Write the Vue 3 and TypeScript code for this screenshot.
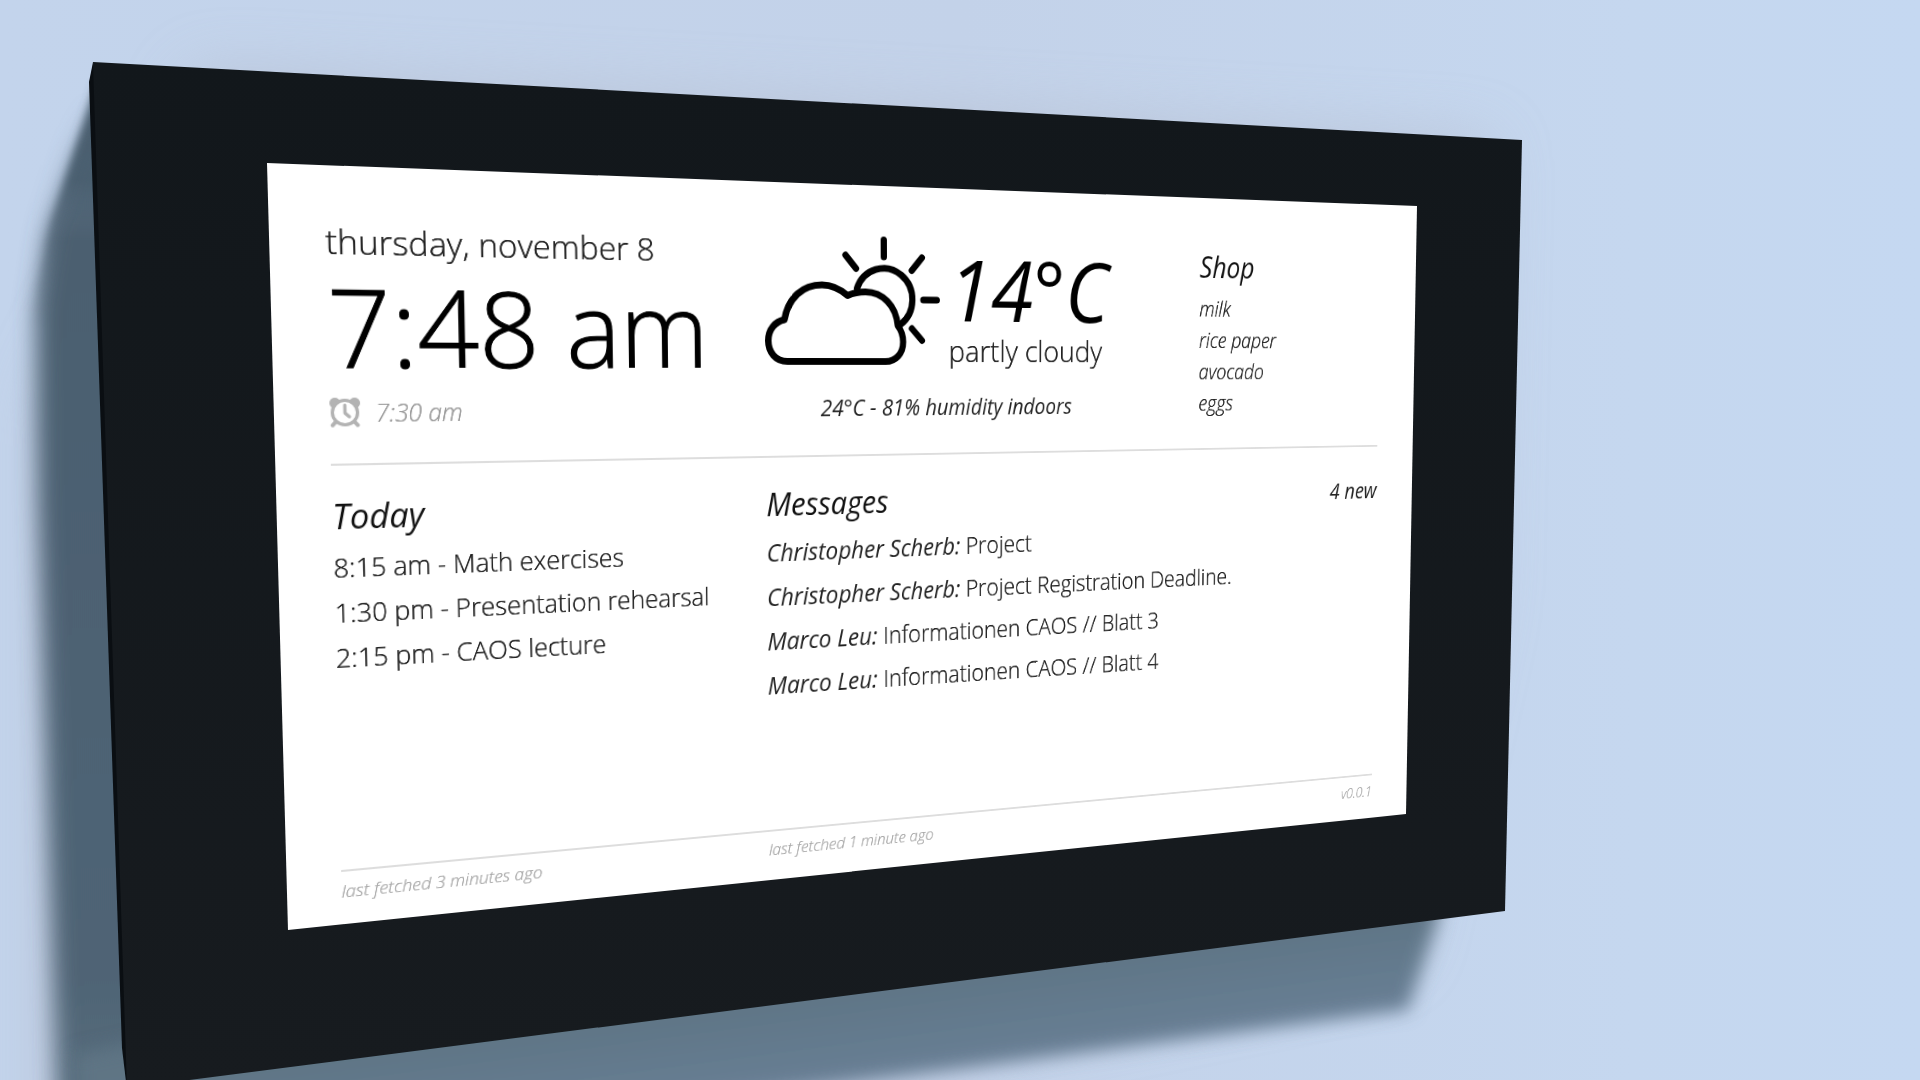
<script setup lang="ts">
import { computed, onBeforeUnmount, onMounted, ref } from 'vue'

type Point = [number, number]

interface Appointment {
  time: string
  title: string
}

interface Message {
  from: string
  subject: string
}

const shopping: string[] = ['milk', 'rice paper', 'avocado', 'eggs']

const appointments: Appointment[] = [
  { time: '8:15 am', title: 'Math exercises' },
  { time: '1:30 pm', title: 'Presentation rehearsal' },
  { time: '2:15 pm', title: 'CAOS lecture' },
]

const messages: Message[] = [
  { from: 'Christopher Scherb', subject: 'Project' },
  { from: 'Christopher Scherb', subject: 'Project Registration Deadline.' },
  { from: 'Marco Leu', subject: 'Informationen CAOS // Blatt 3' },
  { from: 'Marco Leu', subject: 'Informationen CAOS // Blatt 4' },
]

// The wall scene is drawn in this coordinate space and scales with the window.
const SCENE_WIDTH = 1920
// Corners of the display glass in scene space, clockwise from the top left.
const corners: Point[] = [
  [267, 163],
  [1417, 206],
  [1406, 814],
  [288, 930],
]
const glass = corners.map((corner) => corner.join(',')).join(' ')

const scene = ref<HTMLElement | null>(null)
const screen = ref<HTMLElement | null>(null)
const scale = ref(1)
const size = ref({ w: 1280, h: 720 })

function measure(): void {
  if (scene.value) scale.value = scene.value.clientWidth / SCENE_WIDTH
  if (screen.value) size.value = { w: screen.value.offsetWidth, h: screen.value.offsetHeight }
}

// Projects the flat display onto the four corners of the glass.
const projection = computed<string>(() => {
  const [p0, p1, p2, p3] = corners.map(([x, y]): Point => [x * scale.value, y * scale.value])
  const { w, h } = size.value
  const dx1 = p1[0] - p2[0]
  const dx2 = p3[0] - p2[0]
  const sx = p0[0] - p1[0] + p2[0] - p3[0]
  const dy1 = p1[1] - p2[1]
  const dy2 = p3[1] - p2[1]
  const sy = p0[1] - p1[1] + p2[1] - p3[1]
  const det = dx1 * dy2 - dx2 * dy1
  const g = (sx * dy2 - dx2 * sy) / det
  const k = (dx1 * sy - sx * dy1) / det
  const m = [
    (p1[0] - p0[0] + g * p1[0]) / w, (p1[1] - p0[1] + g * p1[1]) / w, 0, g / w,
    (p3[0] - p0[0] + k * p3[0]) / h, (p3[1] - p0[1] + k * p3[1]) / h, 0, k / h,
    0, 0, 1, 0,
    p0[0], p0[1], 0, 1,
  ]
  return `matrix3d(${m.map((n) => n.toFixed(10)).join(',')})`
})

let observer: ResizeObserver | undefined
onMounted(() => {
  measure()
  observer = new ResizeObserver(measure)
  if (scene.value) observer.observe(scene.value)
})
onBeforeUnmount(() => observer?.disconnect())
</script>

<template>
  <div ref="scene" class="scene">
    <svg class="wall" viewBox="0 0 1920 1080" aria-hidden="true">
      <defs>
        <linearGradient id="wallTone" x1="0" y1="0" x2="1" y2="0">
          <stop offset="0" stop-color="#c3d4ec" />
          <stop offset="0.5" stop-color="#c3d2e9" />
          <stop offset="0.85" stop-color="#c5d7ef" />
          <stop offset="1" stop-color="#c5d8f1" />
        </linearGradient>
        <linearGradient id="sideShade" x1="0" y1="0" x2="0" y2="1">
          <stop offset="0" stop-color="#4a5e6f" />
          <stop offset="0.8" stop-color="#4f6475" />
          <stop offset="1" stop-color="#5c7383" />
        </linearGradient>
        <linearGradient id="underShade" gradientUnits="userSpaceOnUse" x1="1000" y1="960" x2="1016" y2="1080">
          <stop offset="0" stop-color="#5e7484" />
          <stop offset="1" stop-color="#6a8198" />
        </linearGradient>
        <linearGradient id="face" x1="0" y1="0" x2="0" y2="1">
          <stop offset="0" stop-color="#12171b" />
          <stop offset="1" stop-color="#171b1f" />
        </linearGradient>
        <linearGradient id="fadeDown" gradientUnits="userSpaceOnUse" x1="0" y1="90" x2="0" y2="240">
          <stop offset="0" stop-color="#000" />
          <stop offset="1" stop-color="#fff" />
        </linearGradient>
        <linearGradient id="fadeUp" gradientUnits="userSpaceOnUse" x1="0" y1="180" x2="0" y2="330">
          <stop offset="0" stop-color="#fff" />
          <stop offset="1" stop-color="#000" />
        </linearGradient>
        <mask id="lower" maskUnits="userSpaceOnUse" x="0" y="0" width="1920" height="1080">
          <rect width="1920" height="1080" fill="url(#fadeDown)" />
        </mask>
        <mask id="upper" maskUnits="userSpaceOnUse" x="0" y="0" width="1920" height="1080">
          <rect width="1920" height="1080" fill="url(#fadeUp)" />
        </mask>
        <filter id="soft" filterUnits="userSpaceOnUse" x="-200" y="-100" width="2200" height="1400">
          <feGaussianBlur stdDeviation="11" />
        </filter>
        <filter id="medium" filterUnits="userSpaceOnUse" x="-200" y="-100" width="2200" height="1400">
          <feGaussianBlur stdDeviation="9" />
        </filter>
        <filter id="tight" filterUnits="userSpaceOnUse" x="-200" y="-100" width="2200" height="1400">
          <feGaussianBlur stdDeviation="4" />
        </filter>
        <filter id="haze" filterUnits="userSpaceOnUse" x="-300" y="-200" width="2500" height="1600">
          <feGaussianBlur stdDeviation="30" />
        </filter>
      </defs>
      <rect width="1920" height="1080" fill="url(#wallTone)" />
      <polygon points="200,70 1490,140 1480,600 1400,960 40,1240 40,400" fill="#b4bccd" opacity="0.6" filter="url(#haze)" />
      <g mask="url(#upper)">
        <polygon points="96,84 74,150 52,220 38,290 34,400 200,400 200,84" fill="url(#sideShade)" filter="url(#tight)" />
      </g>
      <g mask="url(#lower)">
        <polygon points="98,90 72,155 48,230 36,310 38,500 60,1200 300,1200 300,90" fill="url(#sideShade)" filter="url(#soft)" />
        <polygon points="75,1055 800,900 1442,880 1438,919 1408,1010 200,1168 75,1168" fill="url(#underShade)" filter="url(#medium)" />
      </g>
      <polygon points="93,62 89,82 122,1048 127,1090 400,1000" fill="#0a0e12" />
      <polygon points="93,62 1522,140 1505,911 127,1088" fill="url(#face)" />
      <polygon :points="glass" fill="#fff" />
    </svg>

    <main ref="screen" class="screen" :style="{ transform: projection }">
      <section class="summary">
        <div class="clock">
          <p class="date">thursday, november 8</p>
          <h1 class="time">7:48 am</h1>
          <p class="alarm">
            <svg class="alarm-icon" viewBox="0 0 28 28" aria-hidden="true">
              <circle cx="5" cy="5" r="5" fill="#b3b3b3" />
              <circle cx="23" cy="5" r="5" fill="#b3b3b3" />
              <path d="M6 22 L2.500 26 M22 22 L25.500 26" stroke="#b3b3b3" stroke-width="3.500" stroke-linecap="round" />
              <circle cx="14" cy="14" r="11.500" fill="#fff" stroke="#b3b3b3" stroke-width="3" />
              <path d="M14 7 V14.500 L18 18" fill="none" stroke="#b3b3b3" stroke-width="3" stroke-linecap="round" stroke-linejoin="round" />
            </svg>
            <span>7:30 am</span>
          </p>
        </div>

        <div class="weather">
          <div class="outside">
            <svg class="weather-icon" viewBox="0 0 194 133" aria-hidden="true">
              <g fill="none" stroke="#000" stroke-width="7" stroke-linecap="round" stroke-linejoin="round">
                <path d="M100.500 54 A32 32 0 1 1 149 91" />
                <path d="M24 129.500 C11 129.500 3.500 120 3.500 108.500 C3.500 97 11 89 21 87 C25 65 41 51 62 51 C73 51 82 55 90 61.500 C97 58.500 103 57.500 110 57.500 C129 57.500 144 71 146 92 C150 97 152 102 152 109 C152 121 144 129.500 132 129.500 Z" />
                <path d="M130.500 3.500 V21 M88 20 L99.500 33.500 M173.500 21 L162 34.500 M175 65 H190.500 M162 95 L173.500 107.500" />
              </g>
            </svg>
            <div class="reading">
              <p class="temperature">14°C</p>
              <p class="condition">partly cloudy</p>
            </div>
          </div>
          <p class="inside">24°C - 81% humidity indoors</p>
        </div>

        <div class="shop">
          <h2>Shop</h2>
          <ul>
            <li v-for="item in shopping" :key="item">{{ item }}</li>
          </ul>
        </div>
      </section>

      <section class="details">
        <div class="today">
          <h2>Today</h2>
          <ul>
            <li v-for="entry in appointments" :key="entry.time">{{ entry.time }} - {{ entry.title }}</li>
          </ul>
        </div>
        <div class="messages">
          <header>
            <h2>Messages</h2>
            <span class="count">4 new</span>
          </header>
          <ul>
            <li v-for="(message, index) in messages" :key="index">
              <em>{{ message.from }}:</em> {{ message.subject }}
            </li>
          </ul>
        </div>
      </section>

      <footer class="status">
        <span class="status-today">last fetched 3 minutes ago</span>
        <span class="status-messages">last fetched 1 minute ago</span>
        <span>v0.0.1</span>
      </footer>
    </main>
  </div>
</template>

<style>
body {
  margin: 0;
  background: #c5d7ef;
}
</style>

<style scoped>
.scene {
  position: relative;
  width: 100%;
  aspect-ratio: 16 / 9;
  overflow: hidden;
}

.wall {
  display: block;
  width: 100%;
}

.screen {
  position: absolute;
  top: 0;
  left: 0;
  display: flex;
  flex-direction: column;
  box-sizing: border-box;
  width: 1280px;
  height: 720px;
  padding: 48px 50px 18px;
  color: #222;
  font-family: "Open Sans", "Noto Sans", sans-serif;
  font-weight: 300;
  text-shadow: 0 0 0 currentColor;
  transform-origin: 0 0;
}

h1,
h2,
p,
ul {
  margin: 0;
  padding: 0;
  font-weight: inherit;
}

ul {
  list-style: none;
}

.summary {
  display: flex;
  height: 230px;
  border-bottom: 2px solid #ddd;
}

.clock {
  width: 430px;
}

.date {
  font-size: 32px;
  line-height: 44px;
}

.time {
  color: #000;
  font-size: 102px;
  line-height: 114px;
  -webkit-text-stroke: 1px #000;
}

.alarm {
  display: flex;
  align-items: center;
  gap: 14px;
  color: #999;
  font-size: 23px;
  font-style: italic;
  line-height: 48px;
}

.alarm-icon {
  width: 28px;
  height: 28px;
}

.weather {
  width: 509px;
}

.outside {
  display: flex;
  gap: 10px;
  height: 157px;
}

.weather-icon {
  width: 194px;
  height: 133px;
  margin-top: 4px;
}

.reading {
  padding-top: 4px;
}

.temperature {
  color: #000;
  font-size: 90px;
  font-style: italic;
  font-weight: 400;
  line-height: 104px;
  text-shadow: none;
}

.condition {
  font-size: 32px;
  line-height: 28px;
}

.inside {
  width: 410px;
  font-size: 23px;
  font-style: italic;
  font-weight: 400;
  line-height: 48px;
  text-align: center;
  text-shadow: none;
}

h2 {
  color: #111;
  font-size: 32px;
  font-style: italic;
  font-weight: 400;
  line-height: 48px;
  text-shadow: none;
}

.shop {
  padding-top: 4px;
  font-size: 23px;
  font-style: italic;
  line-height: 35px;
}

.shop ul {
  padding-top: 5px;
}

.today ul {
  padding-top: 3px;
}

.details {
  display: flex;
  flex: 1;
  padding-top: 24px;
}

.today {
  width: 430px;
  font-size: 25px;
  line-height: 43px;
}

.messages {
  flex: 1;
  font-size: 25px;
  line-height: 46px;
}

.messages em {
  font-weight: 400;
  text-shadow: none;
}

.messages header {
  display: flex;
  align-items: baseline;
  justify-content: space-between;
}

.count {
  font-size: 25px;
  font-style: italic;
  font-weight: 400;
  line-height: 48px;
  text-shadow: none;
}

.status {
  display: flex;
  padding-top: 5px;
  border-top: 2px solid #ddd;
  color: #aaa;
  font-size: 17px;
  font-style: italic;
  line-height: 28px;
}

.status-today {
  width: 430px;
}

.status-messages {
  flex: 1;
}
</style>
